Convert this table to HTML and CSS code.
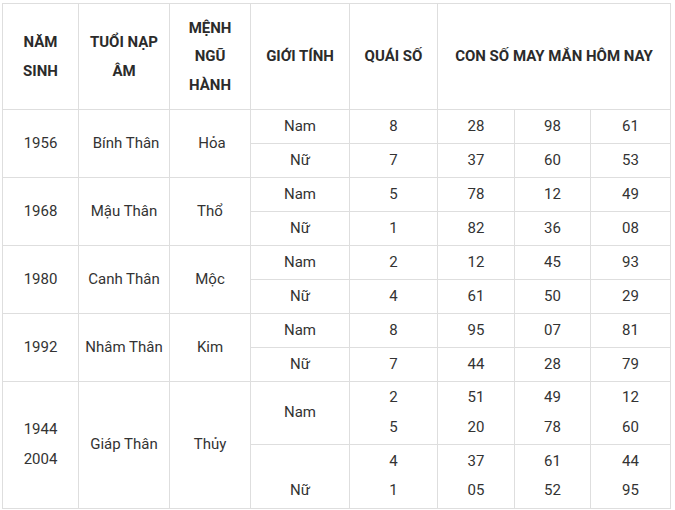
FILE: index.html
```html
<!DOCTYPE html>
<html lang="vi">
<head>
<meta charset="utf-8">
<link rel="stylesheet" href="styles.css">
</head>
<body>
<table class="lucky">
  <colgroup>
    <col class="c1"><col class="c2"><col class="c3"><col class="c4"><col class="c5"><col class="c6"><col class="c7"><col class="c8">
  </colgroup>
  <thead>
    <tr class="head">
      <th>NĂM<br>SINH</th>
      <th>TUỔI NẠP<br>ÂM</th>
      <th>MỆNH<br>NGŨ<br>HÀNH</th>
      <th>GIỚI TÍNH</th>
      <th>QUÁI SỐ</th>
      <th colspan="3">CON SỐ MAY MẮN HÔM NAY</th>
    </tr>
  </thead>
  <tbody>
    <tr class="row"><td rowspan="2">1956</td><td rowspan="2" class="shift">Bính Thân</td><td rowspan="2" class="shift">Hỏa</td><td>Nam</td><td>8</td><td>28</td><td>98</td><td>61</td></tr>
    <tr class="row"><td>Nữ</td><td>7</td><td>37</td><td>60</td><td>53</td></tr>
    <tr class="row"><td rowspan="2">1968</td><td rowspan="2">Mậu Thân</td><td rowspan="2">Thổ</td><td>Nam</td><td>5</td><td>78</td><td>12</td><td>49</td></tr>
    <tr class="row"><td>Nữ</td><td>1</td><td>82</td><td>36</td><td>08</td></tr>
    <tr class="row"><td rowspan="2">1980</td><td rowspan="2">Canh Thân</td><td rowspan="2">Mộc</td><td>Nam</td><td>2</td><td>12</td><td>45</td><td>93</td></tr>
    <tr class="row"><td>Nữ</td><td>4</td><td>61</td><td>50</td><td>29</td></tr>
    <tr class="row"><td rowspan="2">1992</td><td rowspan="2">Nhâm Thân</td><td rowspan="2">Kim</td><td>Nam</td><td>8</td><td>95</td><td>07</td><td>81</td></tr>
    <tr class="row"><td>Nữ</td><td>7</td><td>44</td><td>28</td><td>79</td></tr>
    <tr class="row-a"><td rowspan="2">1944<br>2004</td><td rowspan="2">Giáp Thân</td><td rowspan="2">Thủy</td><td>Nam</td><td>2<br>5</td><td>51<br>20</td><td>49<br>78</td><td>12<br>60</td></tr>
    <tr class="row-b"><td><br>Nữ</td><td>4<br>1</td><td>37<br>05</td><td>61<br>52</td><td>44<br>95</td></tr>
  </tbody>
</table>
</body>
</html>
```

FILE: styles.css
```css
html, body {
  margin: 0;
  padding: 0;
  background: #ffffff;
}

body {
  padding: 3px 0 0 2px;
  font-family: Roboto, "Liberation Sans", Arial, sans-serif;
  color: #333333;
}

.lucky {
  border-collapse: collapse;
  table-layout: fixed;
  width: 669px;
  font-size: 15px;
}

.lucky th,
.lucky td {
  border: 1px solid #dedede;
  padding: 0;
  text-align: center;
  vertical-align: middle;
}

.c1 { width: 76px; }
.c2 { width: 91px; }
.c3 { width: 81px; }
.c4 { width: 99px; }
.c5 { width: 88px; }
.c6 { width: 77px; }
.c7 { width: 76px; }
.c8 { width: 80px; }

.head th {
  height: 105px;
  font-weight: 700;
  line-height: 28.5px;
  color: #2b2b2b;
}

.lucky tbody td {
  padding-bottom: 2px;
}

.row td {
  height: 31px;
  line-height: 20px;
}

.lucky td.shift {
  padding-left: 4px;
}

.row-a td {
  height: 60px;
  line-height: 30px;
}

.row-b td {
  height: 61px;
  line-height: 29px;
}
```
